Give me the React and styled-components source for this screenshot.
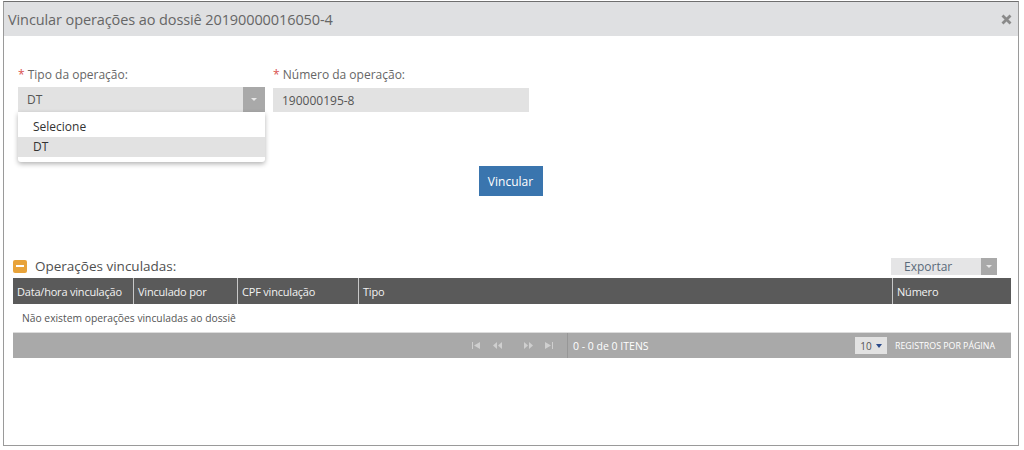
import React from 'react'
import styled, { createGlobalStyle } from 'styled-components'

const GlobalStyle = createGlobalStyle`
  html, body {
    margin: 0;
    padding: 0;
    background: #ffffff;
    font-family: 'Open Sans', 'Noto Sans', Arial, sans-serif;
  }
`

const Frame = styled.div`
  width: 1016px;
  height: 445px;
  margin: 1px 0 0 3px;
  border: 1px solid #9a9a9a;
  border-top: 1px solid #6f6f6f;
  box-sizing: border-box;
  display: flex;
  flex-direction: column;
  background: #fff;
`

const Header = styled.div`
  height: 34px;
  background: #dfe0e2;
  display: flex;
  align-items: center;
  justify-content: space-between;
  padding: 0 6px 0 4px;
`

const Title = styled.div`
  font-size: 14.5px;
  color: #666;
  letter-spacing: -0.1px;
`

const Close = styled.span`
  display: flex;
  color: #8a8a8a;
`

const Body = styled.div`
  display: flex;
  flex-direction: column;
  padding: 30px 8px 0 9px;
`

const FormRow = styled.div`
  display: flex;
  gap: 8px;
  padding-left: 5px;
`

const Field = styled.div`
  display: flex;
  flex-direction: column;
  width: ${({ $w }) => $w}px;
  position: relative;
`

const Label = styled.label`
  font-size: 12px;
  color: #666;
  height: 19px;
  margin-bottom: ${({ $mb }) => $mb}px;
  &::before {
    content: '* ';
    color: #d9534f;
  }
`

const SelectBox = styled.div`
  height: 25px;
  background: #e2e2e2;
  display: flex;
  align-items: center;
  justify-content: space-between;
  font-size: 12px;
  color: #555;
  padding-left: 9px;
`

const Arrow = styled.div`
  width: 22px;
  height: 100%;
  background: #a9a9a9;
  display: flex;
  align-items: center;
  justify-content: center;
  &::after {
    content: '';
    border-left: 3px solid transparent;
    border-right: 3px solid transparent;
    border-top: 3px solid #e8e8e8;
  }
`

const Menu = styled.ul`
  position: absolute;
  top: 46px;
  left: 0;
  right: 0;
  margin: 0;
  padding: 5px 0 5px;
  list-style: none;
  background: #fff;
  box-shadow: 0 2px 5px rgba(0, 0, 0, 0.3);
  border-radius: 0 0 3px 3px;
`

const Option = styled.li`
  height: 20px;
  line-height: 20px;
  padding-left: 15px;
  font-size: 12px;
  color: #333;
  background: ${({ $active }) => ($active ? '#e2e2e2' : 'transparent')};
`

const TextInput = styled.div`
  height: 24px;
  background: #e2e2e2;
  display: flex;
  align-items: center;
  padding-left: 9px;
  font-size: 12px;
  color: #555;
`

const ButtonRow = styled.div`
  display: flex;
  justify-content: center;
  margin-top: 54px;
  padding-right: 2px;
`

const Button = styled.button`
  width: 64px;
  height: 30px;
  border: none;
  background: #3a75ae;
  color: #fff;
  font-family: inherit;
  font-size: 12px;
  padding: 0;
`

const SectionHead = styled.div`
  display: flex;
  align-items: center;
  justify-content: space-between;
  margin-top: 59px;
  padding: 0 13px 0 0;
  height: 22px;
`

const SectionTitle = styled.div`
  display: flex;
  align-items: center;
  gap: 8px;
  font-size: 13.5px;
  color: #4f4f4f;
`

const Collapse = styled.span`
  width: 14px;
  height: 13px;
  background: #e8a33a;
  border-radius: 2px;
  display: flex;
  align-items: center;
  justify-content: center;
  &::after {
    content: '';
    width: 8px;
    height: 2px;
    background: #fff;
  }
`

const Export = styled.div`
  width: 106px;
  height: 17px;
  background: #e5e5e6;
  display: flex;
  align-items: center;
  justify-content: space-between;
  font-size: 12px;
  color: #5a6a7a;
  padding-left: 13px;
  box-sizing: border-box;
`

const ExportArrow = styled(Arrow)`
  width: 16px;
`

const Table = styled.div`
  margin-top: 1px;
  width: 998px;
`

const HeadRow = styled.div`
  display: grid;
  grid-template-columns: 120px 104px 121px 534px 119px;
  background: #5a5a5a;
  height: 26px;
`

const HeadCell = styled.div`
  display: flex;
  align-items: center;
  padding-left: 4px;
  font-size: 11px;
  color: #f2f2f2;
  letter-spacing: -0.2px;
  border-left: ${({ $first }) => ($first ? 'none' : '1px solid #c8c8c8')};
`

const EmptyRow = styled.div`
  height: 28px;
  display: flex;
  align-items: center;
  padding-left: 9px;
  font-size: 10.3px;
  color: #555;
`

const Pager = styled.div`
  height: 25px;
  background: #a9a9a9;
  display: flex;
  align-items: center;
  padding-left: 459px;
  border-top: 1px solid #dcdcdc;
`

const PagerIcons = styled.div`
  display: flex;
  align-items: center;
  gap: 12px;
  color: #cfcfcf;
  height: 100%;
  padding-right: 13px;
  border-right: 1px solid #979797;
`

const PagerIconBox = styled.span`
  display: flex;
  margin-left: ${({ $gap }) => ($gap ? 10 : 0)}px;
`

const PagerInfo = styled.div`
  font-size: 10.5px;
  color: #fff;
  margin-left: 5px;
  flex: 1;
`

const PageSize = styled.div`
  width: 32px;
  height: 17px;
  background: #e2e2e2;
  display: flex;
  align-items: center;
  justify-content: center;
  gap: 4px;
  font-size: 10px;
  color: #555;
  &::after {
    content: '';
    border-left: 3px solid transparent;
    border-right: 3px solid transparent;
    border-top: 4px solid #2a4a8a;
  }
`

const PerPage = styled.div`
  font-size: 8.8px;
  color: #fff;
  margin: 0 16px 0 8px;
`

const PagerIcon = ({ d, gap }) => (
  <PagerIconBox $gap={gap}>
    <svg width="9" height="7" viewBox="0 0 9 7" fill="currentColor">
      <path d={d} />
    </svg>
  </PagerIconBox>
)

const columns = ['Data/hora vinculação', 'Vinculado por', 'CPF vinculação', 'Tipo', 'Número']

export default function App() {
  return (
    <>
      <GlobalStyle />
      <Frame>
        <Header>
          <Title>Vincular operações ao dossiê 20190000016050-4</Title>
          <Close>
            <svg width="11" height="11" viewBox="0 0 11 11">
              <path d="M1.5 1.5 L9.5 9.5 M9.5 1.5 L1.5 9.5" stroke="currentColor" strokeWidth="2.8" />
            </svg>
          </Close>
        </Header>
        <Body>
          <FormRow>
            <Field $w={247}>
              <Label $mb={2}>Tipo da operação:</Label>
              <SelectBox>
                DT
                <Arrow />
              </SelectBox>
              <Menu>
                <Option>Selecione</Option>
                <Option $active>DT</Option>
              </Menu>
            </Field>
            <Field $w={256}>
              <Label $mb={3}>Número da operação:</Label>
              <TextInput>190000195-8</TextInput>
            </Field>
          </FormRow>
          <ButtonRow>
            <Button>Vincular</Button>
          </ButtonRow>
          <SectionHead>
            <SectionTitle>
              <Collapse />
              Operações vinculadas:
            </SectionTitle>
            <Export>
              Exportar
              <ExportArrow />
            </Export>
          </SectionHead>
          <Table>
            <HeadRow>
              {columns.map((c, i) => (
                <HeadCell key={c} $first={i === 0}>{c}</HeadCell>
              ))}
            </HeadRow>
            <EmptyRow>Não existem operações vinculadas ao dossiê</EmptyRow>
            <Pager>
              <PagerIcons>
                <PagerIcon d="M0 0h1v7H0z M8 0v7L2 3.5z" />
                <PagerIcon d="M4 0v7L0 3.5z M9 0v7L5 3.5z" />
                <PagerIcon gap d="M0 0v7l4-3.5z M5 0v7l4-3.5z" />
                <PagerIcon d="M0 0v7l6-3.5z M7 0h1v7H7z" />
              </PagerIcons>
              <PagerInfo>0 - 0 de 0 ITENS</PagerInfo>
              <PageSize>10</PageSize>
              <PerPage>REGISTROS POR PÁGINA</PerPage>
            </Pager>
          </Table>
        </Body>
      </Frame>
    </>
  )
}
